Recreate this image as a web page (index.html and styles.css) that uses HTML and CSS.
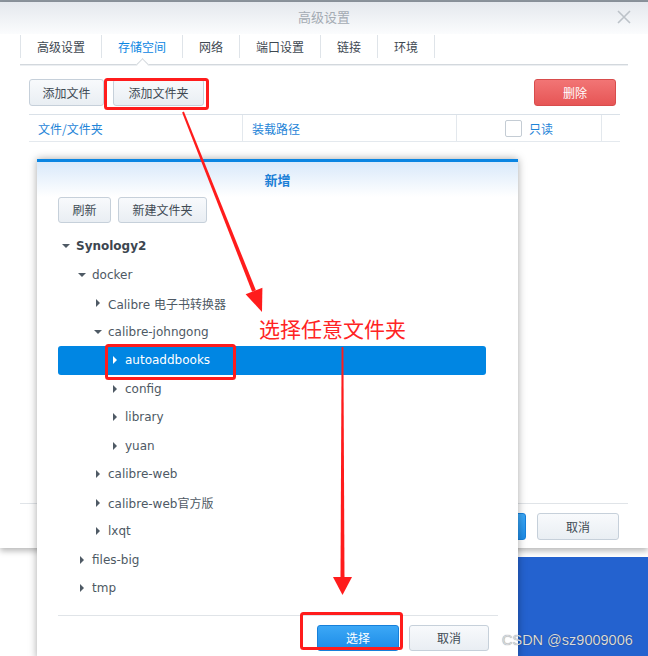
FILE: index.html
```html
<!DOCTYPE html>
<html lang="zh-CN">
<head>
<meta charset="utf-8">
<title>高级设置</title>
<link rel="stylesheet" href="styles.css">
</head>
<body>
<div class="screen">
  <div class="topbar"></div>
  <section class="win">
    <header class="win-head">
      <span></span>
      <span class="win-title">高级设置</span>
      <svg class="close" width="14" height="14" viewBox="0 0 14 14"><path d="M1 1L13 13M13 1L1 13" stroke="#bcc2c8" stroke-width="1.6" fill="none"/></svg>
    </header>
    <nav class="tabs">
      <span class="tab">高级设置</span>
      <span class="tab active">存储空间</span>
      <span class="tab">网络</span>
      <span class="tab">端口设置</span>
      <span class="tab">链接</span>
      <span class="tab last">环境</span>
    </nav>
    <div class="toolbar">
      <button class="btn w1">添加文件</button>
      <button class="btn w2">添加文件夹</button>
      <span class="grow"></span>
      <button class="btn danger">删除</button>
    </div>
    <div class="grid-head">
      <div class="col">文件/文件夹</div>
      <div class="col">装载路径</div>
      <div class="col center"><span class="chk"></span>只读</div>
      <div class="col last"></div>
    </div>
    <div class="win-body"></div>
    <footer class="win-foot">
      <button class="btn primary wide">确定</button>
      <button class="btn wide">取消</button>
    </footer>
  </section>
  <div class="desktop">
    <div class="desk-white"></div>
    <div class="desk-blue"></div>
  </div>

  <section class="dialog">
    <header class="dlg-head">新增</header>
    <div class="dlg-tools">
      <button class="btn t1">刷新</button>
      <button class="btn t2">新建文件夹</button>
    </div>
    <ul class="tree">
      <li class="node l0 bold"><svg class="arr" viewBox="0 0 10 10"><path d="M1 3h8L5 7z"/></svg>Synology2</li>
      <li class="node l1"><svg class="arr" viewBox="0 0 10 10"><path d="M1 3h8L5 7z"/></svg>docker</li>
      <li class="node l2"><svg class="arr" viewBox="0 0 10 10"><path d="M3 1v8l4-4z"/></svg>Calibre 电子书转换器</li>
      <li class="node l2"><svg class="arr" viewBox="0 0 10 10"><path d="M1 3h8L5 7z"/></svg>calibre-johngong</li>
      <li class="node l3 sel"><svg class="arr" viewBox="0 0 10 10"><path d="M3 1v8l4-4z"/></svg>autoaddbooks</li>
      <li class="node l3"><svg class="arr" viewBox="0 0 10 10"><path d="M3 1v8l4-4z"/></svg>config</li>
      <li class="node l3"><svg class="arr" viewBox="0 0 10 10"><path d="M3 1v8l4-4z"/></svg>library</li>
      <li class="node l3"><svg class="arr" viewBox="0 0 10 10"><path d="M3 1v8l4-4z"/></svg>yuan</li>
      <li class="node l2"><svg class="arr" viewBox="0 0 10 10"><path d="M3 1v8l4-4z"/></svg>calibre-web</li>
      <li class="node l2"><svg class="arr" viewBox="0 0 10 10"><path d="M3 1v8l4-4z"/></svg>calibre-web官方版</li>
      <li class="node l2"><svg class="arr" viewBox="0 0 10 10"><path d="M3 1v8l4-4z"/></svg>lxqt</li>
      <li class="node l1"><svg class="arr" viewBox="0 0 10 10"><path d="M3 1v8l4-4z"/></svg>files-big</li>
      <li class="node l1"><svg class="arr" viewBox="0 0 10 10"><path d="M3 1v8l4-4z"/></svg>tmp</li>
    </ul>
    <footer class="dlg-foot">
      <button class="btn primary wide">选择</button>
      <button class="btn wide2">取消</button>
    </footer>
  </section>

  <svg class="annot" width="648" height="656" viewBox="0 0 648 656">
    <g fill="none" stroke="#ff1c1c" stroke-width="3">
      <rect x="105.5" y="79.5" width="102" height="29" rx="2"/>
      <rect x="106.5" y="345.5" width="128" height="33" rx="2"/>
      <rect x="301.5" y="613.5" width="100" height="35" rx="2"/>
    </g>
    <g fill="#ff1c1c">
      <polygon points="183.9,111.6 182.1,112.4 252.1,291.7 255.9,290.3"/>
      <polygon points="262,312 245.6,294.3 262.4,287.7"/>
      <polygon points="341.6,347 343.4,347 344.5,579 340.5,579"/>
      <polygon points="342.5,595 333,577 352,577"/>
    </g>
  </svg>
  <div class="annot-text">选择任意文件夹</div>
  <div class="watermark">CSDN @sz9009006</div>
</div>
</body>
</html>
```

FILE: styles.css
```css
* { box-sizing: border-box; }
html, body { margin: 0; padding: 0; }
body {
  width: 648px;
  height: 656px;
  overflow: hidden;
  background: #ffffff;
  font-family: "DejaVu Sans", "Noto Sans CJK SC", sans-serif;
  font-size: 12px;
  color: #404a54;
}
.screen {
  position: relative;
  width: 648px;
  height: 656px;
  display: flex;
  flex-direction: column;
}
.topbar {
  height: 2px;
  background: #8c959e;
}

/* main window */
.win {
  position: relative;
  z-index: 1;
  height: 546px;
  display: flex;
  flex-direction: column;
  background: #ffffff;
  box-shadow: 0 3px 6px rgba(0, 0, 0, 0.28);
}
.win-head {
  height: 32px;
  display: grid;
  grid-template-columns: 1fr auto 1fr;
  align-items: center;
  background: linear-gradient(#e4e8ed, #fbfcfd);
}
.win-title {
  font-family: "Noto Sans CJK SC", sans-serif;
  font-size: 13px;
  line-height: 16px;
  margin-top: -2px;
  color: #a4abb3;
}
.close {
  justify-self: end;
  margin-right: 17px;
  margin-top: -2px;
}
.tabs {
  margin: 0 20px;
  height: 31px;
  display: flex;
  align-items: flex-start;
  border-bottom: 1px solid #d3d8dd;
  box-shadow: 0 1px 0 #eceff2;
}
.tab {
  position: relative;
  margin-top: 1px;
  height: 23px;
  line-height: 23px;
  padding: 0 16px;
  border-left: 1px solid #dfe4e9;
  font-family: "Noto Sans CJK SC", sans-serif;
  font-size: 12px;
  color: #3e4851;
}
.tab.last { border-right: 1px solid #dfe4e9; }
.tab.active { color: #0b86e3; }
.tab.active::after {
  content: "";
  position: absolute;
  left: 50%;
  top: 25px;
  width: 8px;
  height: 8px;
  margin-left: -4px;
  background: #ffffff;
  border-left: 1px solid #d3d8dd;
  border-top: 1px solid #d3d8dd;
  transform: rotate(45deg);
}
.toolbar {
  margin-top: 14px;
  padding: 0 32px 0 29px;
  display: flex;
  gap: 9px;
}
.grow { flex: 1; }

.btn {
  height: 27px;
  padding: 0;
  border: 1px solid #c6d0da;
  border-radius: 3px;
  background: linear-gradient(#f8fafc, #e9eef3);
  font-family: "Noto Sans CJK SC", sans-serif;
  font-size: 12px;
  color: #404a54;
  line-height: 25px;
  white-space: nowrap;
  text-align: center;
}
.btn.w1 { width: 75px; }
.btn.w2 { width: 91px; }
.btn.danger {
  width: 82px;
  color: #ffffff;
  border-color: #d84c4c;
  background: linear-gradient(#f27575, #e65555);
}
.btn.primary {
  color: #ffffff;
  border-color: #1680da;
  background: linear-gradient(#3ca8f6, #1c8be7);
}
.btn.wide { width: 82px; }
.btn.wide2 { width: 80px; }

.grid-head {
  margin: 8px 28px 0 29px;
  height: 28px;
  display: grid;
  grid-template-columns: 214px 214px 145px 1fr;
  border-top: 1px solid #dae1e8;
  border-bottom: 1px solid #e4e9ee;
}
.col {
  display: flex;
  align-items: center;
  padding-left: 9px;
  border-right: 1px solid #e3e8ed;
  font-family: "Noto Sans CJK SC", sans-serif;
  color: #1f85d8;
}
.col.last { border-right: 0; }
.col.center { justify-content: center; padding-left: 0; }
.chk {
  width: 17px;
  height: 17px;
  margin-right: 7px;
  border: 1px solid #c4ccd4;
  border-radius: 2px;
  background: #ffffff;
}
.win-body { flex: 1; }
.win-foot {
  margin: 0 20px;
  border-top: 1px solid #e0e4e8;
  padding: 9px 9px 8px 0;
  display: flex;
  justify-content: flex-end;
  gap: 11px;
}

/* desktop below */
.desktop {
  flex: 1;
  display: flex;
}
.desk-white { width: 518px; background: #ffffff; }
.desk-blue {
  flex: 1;
  margin-top: 9px;
  background: #2462cf;
}

/* dialog */
.dialog {
  position: absolute;
  z-index: 5;
  left: 37px;
  top: 159px;
  width: 481px;
  height: 500px;
  display: flex;
  flex-direction: column;
  background: #ffffff;
  border-top: 3px solid #0a85e2;
  box-shadow: 0 0 8px rgba(0, 0, 0, 0.35);
}
.dlg-head {
  height: 35px;
  display: flex;
  align-items: center;
  justify-content: center;
  background: linear-gradient(#d9e9fa, #ffffff);
  font-family: "Noto Sans CJK SC", sans-serif;
  font-weight: bold;
  font-size: 13px;
  color: #1a7fd6;
}
.dlg-tools {
  padding: 0 21px;
  display: flex;
  gap: 7px;
}
.dlg-tools .btn { height: 26px; line-height: 24px; }
.btn.t1 { width: 53px; }
.btn.t2 { width: 89px; }
.tree {
  list-style: none;
  margin: 9px 32px 0 21px;
  padding: 0;
  flex: 1;
}
.node {
  height: 28.5px;
  display: flex;
  align-items: center;
  font-family: "DejaVu Sans", "Noto Sans CJK SC", sans-serif;
  font-size: 12px;
  color: #4e5964;
  border-radius: 3px;
}
.node.bold { font-weight: bold; color: #3c4650; }
.arr {
  width: 10px;
  height: 10px;
  margin-right: 5px;
  fill: #4f5a65;
  flex: none;
}
.l0 { padding-left: 3px; }
.l1 { padding-left: 19px; }
.l2 { padding-left: 35px; }
.l3 { padding-left: 52px; }
.node.sel {
  background: #0086e3;
  color: #ffffff;
}
.node.sel .arr { fill: #ffffff; }
.dlg-foot {
  margin: 0 20px 0 21px;
  border-top: 1px solid #e0e4e8;
  padding: 9px 9px 8px 0;
  display: flex;
  justify-content: flex-end;
  gap: 10px;
}
.dlg-foot .btn { height: 26px; line-height: 24px; }

/* annotations */
.annot {
  position: absolute;
  left: 0;
  top: 0;
  z-index: 10;
  pointer-events: none;
}
.annot-text {
  position: absolute;
  z-index: 11;
  left: 259px;
  top: 315px;
  font-family: "Noto Sans CJK SC", sans-serif;
  font-size: 21px;
  line-height: 26px;
  color: #ff2424;
}
.watermark {
  position: absolute;
  z-index: 11;
  left: 502px;
  top: 631px;
  font-family: "Liberation Sans", sans-serif;
  font-size: 14.5px;
  line-height: 18px;
  color: #d6dadf;
  text-shadow: 0 0 1px rgba(0, 0, 0, 0.55);
}
```
